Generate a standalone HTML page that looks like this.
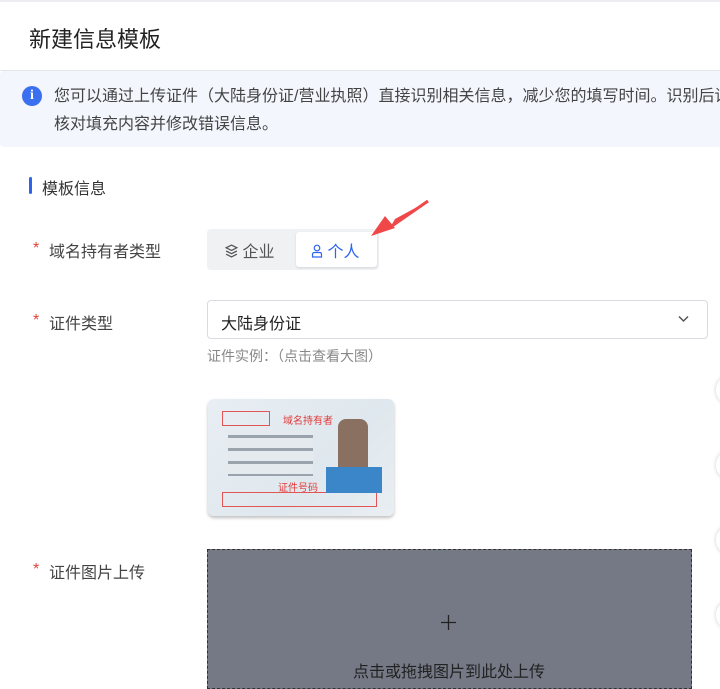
<!DOCTYPE html>
<html><head><meta charset="utf-8"><style>
*{margin:0;padding:0;box-sizing:border-box}
body{width:720px;height:686px;overflow:hidden;background:#fff;font-family:"Liberation Sans","Noto Sans CJK SC",sans-serif;position:relative;color:#333}
.abs{position:absolute}
</style></head><body>
<div class="abs" style="left:0;top:0;width:720px;height:2px;background:#eceef1"></div>
<div class="abs" style="left:29px;top:22px;font-size:22px;color:#222">新建信息模板</div>
<div class="abs" style="left:0;top:70px;width:720px;height:1px;background:#e4e6ea"></div>
<div class="abs" style="left:0;top:71px;width:722px;height:76px;background:#f3f6fd;border-radius:4px"></div>
<div class="abs" style="left:22px;top:86px;width:20px;height:20px;border-radius:50%;background:#3a6ff0;color:#fff;font-size:14px;font-weight:bold;text-align:center;line-height:20px;font-family:'Liberation Serif',serif">i</div>
<div class="abs" style="left:54px;top:83px;font-size:16px;line-height:28px;color:#444;white-space:nowrap">您可以通过上传证件（大陆身份证/营业执照）直接识别相关信息，减少您的填写时间。识别后请<br>核对填充内容并修改错误信息。</div>
<div class="abs" style="left:29px;top:177px;width:3px;height:17px;background:#2c64f0;border-radius:2px"></div>
<div class="abs" style="left:42px;top:175px;font-size:16px;color:#333">模板信息</div>
<div class="abs" style="left:33px;top:240px;font-size:16px;color:#e2423b">*</div>
<div class="abs" style="left:49px;top:238px;font-size:16px;color:#444">域名持有者类型</div>
<div class="abs" style="left:207px;top:229px;width:172px;height:41px;background:#f0f1f3;border-radius:4px"></div>
<div class="abs" style="left:225px;top:238px;font-size:16px;color:#555">
<svg width="13" height="14" viewBox="0 0 12 13" style="vertical-align:-1px"><path d="M6 1L11 3.5 6 6 1 3.5Z M1 6.5L6 9 11 6.5 M1 9.5L6 12 11 9.5" fill="none" stroke="#555" stroke-width="1.2"/></svg> 企业</div>
<div class="abs" style="left:296px;top:232px;width:81px;height:35px;background:#fff;border-radius:3px;box-shadow:0 1px 2px rgba(0,0,0,.12)"></div>
<div class="abs" style="left:311px;top:238px;font-size:16px;color:#2c64f0">
<svg width="12" height="14" viewBox="0 0 12 14" style="vertical-align:-1px"><circle cx="6" cy="4" r="2.8" fill="none" stroke="#2c64f0" stroke-width="1.2"/><path d="M1.5 13V10.5Q1.5 8.5 3.5 8.5H8.5Q10.5 8.5 10.5 10.5V13Z" fill="none" stroke="#2c64f0" stroke-width="1.2"/></svg> 个人</div>
<svg class="abs" style="left:365px;top:198px" width="65" height="42" viewBox="0 0 65 42"><path d="M63 3L26 28 30 21 Z M6 38L20 18 30 30Z" fill="#f04848"/><path d="M63 3L24 30" stroke="#f04848" stroke-width="3"/></svg>
<div class="abs" style="left:33px;top:312px;font-size:16px;color:#e2423b">*</div>
<div class="abs" style="left:49px;top:310px;font-size:16px;color:#444">证件类型</div>
<div class="abs" style="left:207px;top:300px;width:501px;height:39px;border:1px solid #d8dbe0;border-radius:4px"></div>
<div class="abs" style="left:221px;top:310px;font-size:16px;color:#222">大陆身份证</div>
<svg class="abs" style="left:678px;top:315px" width="11" height="8" viewBox="0 0 11 8"><path d="M1 1.5L5.5 6 10 1.5" fill="none" stroke="#555" stroke-width="1.5"/></svg>
<div class="abs" style="left:207px;top:346px;font-size:14px;color:#888">证件实例：（点击查看大图）</div>
<div class="abs" style="left:208px;top:399px;width:186px;height:117px;border-radius:6px;background:linear-gradient(135deg,#e8eef3,#dfe8ee 60%,#e9eef2);box-shadow:0 2px 3px rgba(0,0,0,.25)">
<div class="abs" style="left:14px;top:12px;width:48px;height:15px;border:1px solid #e25555"></div>
<div class="abs" style="left:75px;top:13px;font-size:10px;color:#e23b3b">域名持有者</div>
<div class="abs" style="left:70px;top:80px;font-size:10px;color:#e23b3b">证件号码</div>
<div class="abs" style="left:14px;top:93px;width:155px;height:15px;border:1px solid #e25555"></div>
<div class="abs" style="left:20px;top:32px;width:85px;height:45px;background:repeating-linear-gradient(#e4eaee 0 4px,#9aa2ab 4px 7px,#e4eaee 7px 13px)"></div>
<div class="abs" style="left:130px;top:20px;width:30px;height:50px;background:#8a7060;border-radius:8px 8px 2px 2px"></div>
<div class="abs" style="left:118px;top:68px;width:56px;height:26px;background:#3b86c8"></div>
</div>
<div class="abs" style="left:33px;top:561px;font-size:16px;color:#e2423b">*</div>
<div class="abs" style="left:49px;top:559px;font-size:16px;color:#444">证件图片上传</div>
<div class="abs" style="left:207px;top:549px;width:485px;height:140px;background:#747985;border:1px dashed #333"></div>
<svg class="abs" style="left:441px;top:615px" width="15" height="15" viewBox="0 0 15 15"><path d="M7.5 0V15M0 7.5H15" stroke="#222" stroke-width="1.3"/></svg>
<div class="abs" style="left:353px;top:658px;font-size:16px;color:#222">点击或拖拽图片到此处上传</div>
<div class="abs" style="left:716px;top:375px;width:30px;height:30px;border-radius:50%;background:#fff;box-shadow:0 0 4px rgba(0,0,0,.2)"></div>
<div class="abs" style="left:716px;top:450px;width:30px;height:30px;border-radius:50%;background:#fff;box-shadow:0 0 4px rgba(0,0,0,.2)"></div>
<div class="abs" style="left:716px;top:525px;width:30px;height:30px;border-radius:50%;background:#fff;box-shadow:0 0 4px rgba(0,0,0,.2)"></div>
<div class="abs" style="left:716px;top:600px;width:30px;height:30px;border-radius:50%;background:#fff;box-shadow:0 0 4px rgba(0,0,0,.2)"></div>
</body></html>
